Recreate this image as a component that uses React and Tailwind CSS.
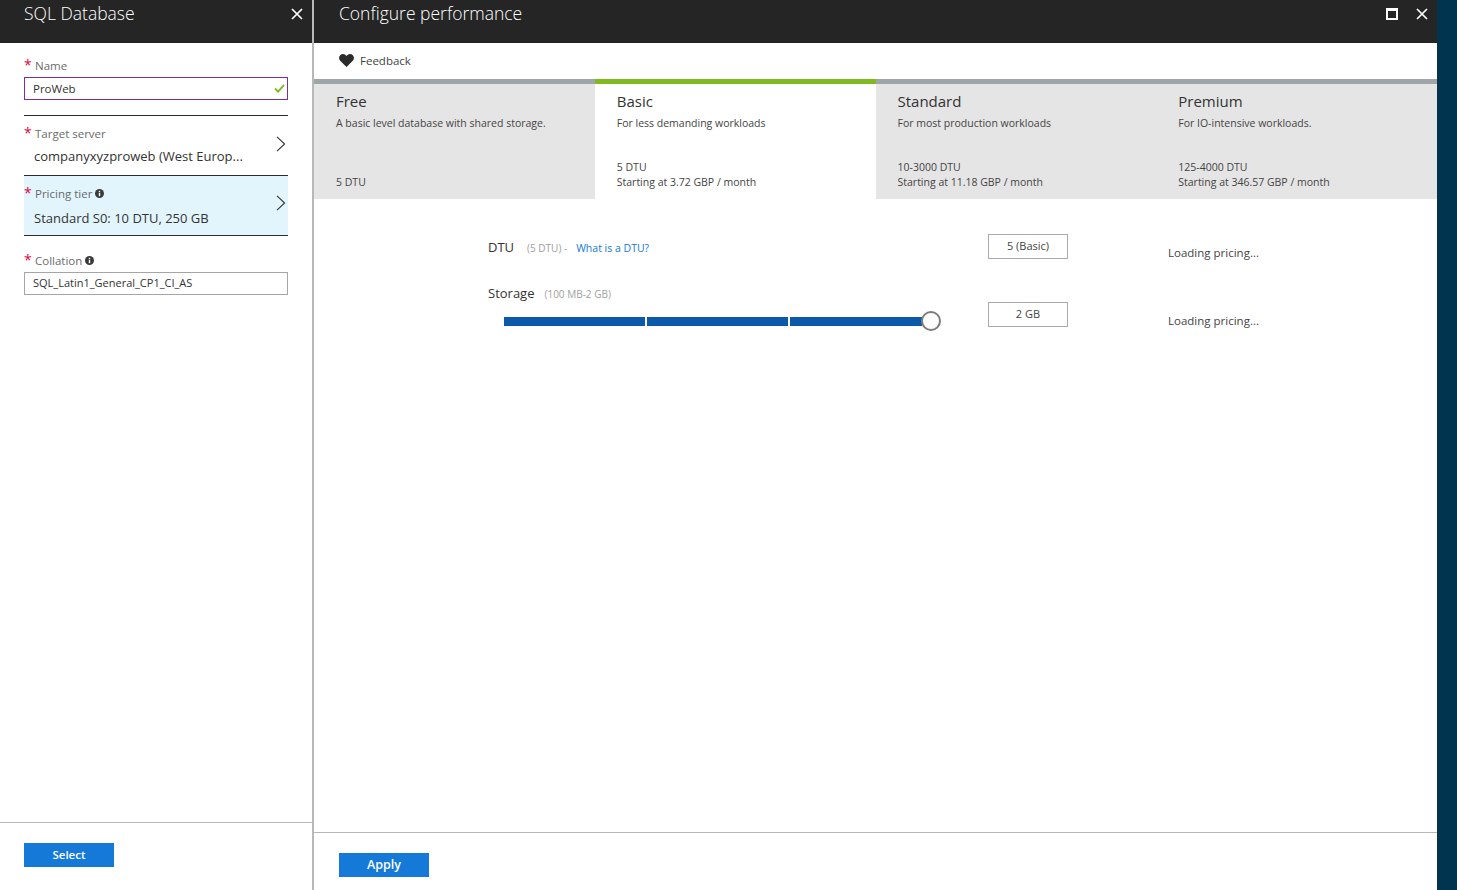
const FONT = "font-['Open_Sans','Noto_Sans',sans-serif]"

function CloseIcon({ className }) {
  return (
    <svg viewBox="0 0 12 12" className={className} fill="none" stroke="currentColor" strokeWidth="1.7">
      <path d="M1 1l10 10M11 1L1 11" />
    </svg>
  )
}

function Chevron() {
  return (
    <svg viewBox="0 0 10 16" className="w-[10px] h-[16px] text-[#333]" fill="none" stroke="currentColor" strokeWidth="1.1">
      <path d="M1 .8L8.6 8 1 15.2" />
    </svg>
  )
}

function Info() {
  return (
    <svg viewBox="0 0 10 10" className="w-[9px] h-[9px] ml-[3px] mt-[-1px]">
      <circle cx="5" cy="5" r="5" fill="#3a3a3a" />
      <rect x="4.2" y="4.2" width="1.6" height="3.8" fill="#fff" />
      <rect x="4.2" y="2" width="1.6" height="1.5" fill="#fff" />
    </svg>
  )
}

function Label({ children, info }) {
  return (
    <div className="flex items-center h-4 text-[11.5px] text-[#6b6b6b]">
      <span className="w-[11px] text-[#e3003f] text-[14px] leading-none -mt-[2px]">*</span>
      {children}
      {info && <Info />}
    </div>
  )
}

function Tier({ name, desc, lines, active }) {
  return (
    <div className={'w-[281px] flex flex-col pl-[22px] pt-[7px] pb-[9px] border-t-[5px] ' + (active ? 'bg-white border-[#7fba20]' : 'bg-[#e5e5e5] border-[#a0a5a8]')}>
      <div className="text-[15px] leading-5 text-[#333]">{name}</div>
      <div className="text-[10.5px] leading-4 mt-[4px] text-[#444]">{desc}</div>
      <div className="mt-auto text-[10.5px] leading-[15px] text-[#444]">
        {lines.map(l => <div key={l}>{l}</div>)}
      </div>
    </div>
  )
}

export default function App() {
  return (
    <div className={'flex h-[890px] w-[1457px] overflow-hidden bg-white ' + FONT}>
      <div className="w-[314px] shrink-0 flex flex-col border-r-2 border-[#b8b8b8]">
        <div className="h-[43px] shrink-0 bg-[#252525] flex justify-between pl-6 pr-[9px] text-white">
          <div className="text-[17.5px] leading-[27px] font-light">SQL Database</div>
          <CloseIcon className="w-3 h-3 mt-[8px]" />
        </div>

        <div className="flex-1 pt-[15px]">
          <div className="mx-6">
            <Label>Name</Label>
            <div className="mt-[3px] h-[23px] border border-[#7d2e9e] flex items-center justify-between pl-2 pr-[2px] text-[11.5px] text-[#333]">
              ProWeb
              <svg viewBox="0 0 12 10" className="w-[11px] h-[9px]" fill="none" stroke="#7fba20" strokeWidth="2">
                <path d="M1 5l3.5 3.5L11 1" />
              </svg>
            </div>
          </div>

          <div className="mx-6 mt-[15px] h-[60px] border-t border-[#2b2b2b] flex justify-between pt-[10px]">
            <div>
              <Label>Target server</Label>
              <div className="mt-[4px] ml-[10px] text-[13px] leading-5 text-[#333]">companyxyzproweb (West Europ...</div>
            </div>
            <div className="mt-[10px] mr-[2px]"><Chevron /></div>
          </div>

          <div className="mx-6 h-[61px] border-y border-[#2b2b2b] bg-[#e2f5fd] flex justify-between pt-[10px]">
            <div>
              <Label info>Pricing tier</Label>
              <div className="mt-[6px] ml-[10px] text-[13px] leading-5 text-[#333]">Standard S0: 10 DTU, 250 GB</div>
            </div>
            <div className="mt-[9px] mr-[2px]"><Chevron /></div>
          </div>

          <div className="mx-6 mt-[17px]">
            <Label info>Collation</Label>
            <div className="mt-[3px] h-[23px] border border-[#a5a5a5] flex items-center pl-2 text-[11px] text-[#333]">SQL_Latin1_General_CP1_CI_AS</div>
          </div>
        </div>

        <div className="h-[68px] shrink-0 border-t border-[#b8b8b8] pt-[20px] pl-6">
          <div className="w-[90px] h-6 bg-[#1579d8] text-white text-[11.5px] font-semibold flex items-center justify-center">Select</div>
        </div>
      </div>

      <div className="flex-1 flex flex-col min-w-0">
        <div className="h-[43px] shrink-0 bg-[#252525] flex justify-between pl-[25px] pr-[9px] text-white">
          <div className="text-[17.5px] leading-[27px] font-light">Configure performance</div>
          <div className="flex gap-[18px] mt-[8px]">
            <div className="w-3 h-3 border border-t-[3px] border-x-[2px] border-b-[2px] border-white"></div>
            <CloseIcon className="w-3 h-3" />
          </div>
        </div>

        <div className="h-9 shrink-0 flex items-center pl-[25px] text-[11.5px] text-[#444]">
          <svg viewBox="0 0 16 14" className="w-[15px] h-[13px] mr-[6px] -mt-[2px]">
            <path fill="#2b2b2b" d="M8 14L1.2 7.2C-.4 5.5-.4 2.9 1.2 1.3 2.8-.3 5.3-.3 7 1.2l1 .9 1-.9c1.7-1.5 4.2-1.5 5.8.1 1.6 1.6 1.6 4.2 0 5.9z" />
          </svg>
          Feedback
        </div>

        <div className="flex h-[120px] shrink-0">
          <Tier name="Free" desc="A basic level database with shared storage." lines={['5 DTU']} />
          <Tier active name="Basic" desc="For less demanding workloads" lines={['5 DTU', 'Starting at 3.72 GBP / month']} />
          <Tier name="Standard" desc="For most production workloads" lines={['10-3000 DTU', 'Starting at 11.18 GBP / month']} />
          <Tier name="Premium" desc="For IO-intensive workloads." lines={['125-4000 DTU', 'Starting at 346.57 GBP / month']} />
        </div>

        <div className="flex-1 pl-[174px] pt-[35px]">
          <div className="flex h-[25px]">
            <div className="w-[500px] flex items-baseline pt-[4px]">
              <span className="text-[13px] text-[#333]">DTU</span>
              <span className="ml-[13px] text-[10px] text-[#a0a0a0]">(5 DTU) -</span>
              <span className="ml-[9px] text-[10.5px] text-[#1579d8]">What is a DTU?</span>
            </div>
            <div className="w-20 border border-[#aaa] flex items-center justify-center text-[11px] text-[#444]">5 (Basic)</div>
            <div className="ml-[100px] pt-[11px] text-[11.5px] leading-4 text-[#444]">Loading pricing...</div>
          </div>

          <div className="flex mt-[43px] h-[25px]">
            <div className="w-[500px] -mt-[18px]">
              <div className="flex items-baseline h-[18px]">
                <span className="text-[13px] text-[#333]">Storage</span>
                <span className="ml-[10px] text-[10px] text-[#a0a0a0]">(100 MB-2 GB)</span>
              </div>
              <div className="flex items-center gap-[2px] ml-[16px] mt-[9px]">
                <div className="w-[141px] h-[9px] bg-[#0b5aa9]"></div>
                <div className="w-[141px] h-[9px] bg-[#0b5aa9]"></div>
                <div className="w-[132px] h-[9px] bg-[#0b5aa9]"></div>
                <div className="w-5 h-5 -ml-[3px] rounded-full border-2 border-[#7d7d7d] bg-white"></div>
              </div>
            </div>
            <div className="w-20 border border-[#aaa] flex items-center justify-center text-[11px] text-[#444]">2 GB</div>
            <div className="ml-[100px] pt-[11px] text-[11.5px] leading-4 text-[#444]">Loading pricing...</div>
          </div>
        </div>

        <div className="h-[58px] shrink-0 border-t border-[#b8b8b8] pt-[20px] pl-[25px]">
          <div className="w-[90px] h-6 bg-[#1579d8] text-white text-[12.5px] font-semibold flex items-center justify-center">Apply</div>
        </div>
      </div>

      <div className="w-5 shrink-0 bg-[#00344f]"></div>
    </div>
  )
}
